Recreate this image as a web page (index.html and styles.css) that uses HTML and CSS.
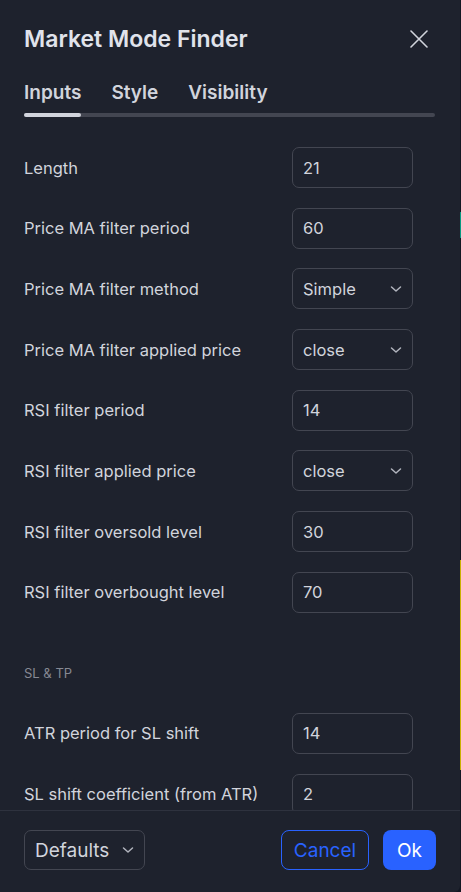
FILE: index.html
```html
<!DOCTYPE html>
<html>
<head>
<meta charset="utf-8">
<link rel="stylesheet" href="styles.css">
</head>
<body>
<div class="chart-edge">
  <span class="edge teal"></span>
  <span class="edge yellow"></span>
</div>
<div class="dialog">
  <div class="header">
    <div class="title">Market Mode Finder</div>
    <svg class="close" width="18" height="18" viewBox="0 0 18 18"><path d="M1 1L17 17M17 1L1 17" stroke="#d1d4dc" stroke-width="1.6" fill="none" stroke-linecap="round"/></svg>
  </div>
  <div class="tabs">
    <div class="tab active">Inputs</div>
    <div class="tab">Style</div>
    <div class="tab">Visibility</div>
  </div>
  <div class="tabbar"><div class="tabbar-active"></div></div>
  <div class="content">
    <div class="row"><div class="label">Length</div><div class="field">21</div></div>
    <div class="row"><div class="label">Price MA filter period</div><div class="field">60</div></div>
    <div class="row"><div class="label">Price MA filter method</div><div class="field select">Simple<svg class="chev" width="12" height="8" viewBox="0 0 12 8"><path d="M1.5 2l4.5 4 4.5-4" stroke="#b2b5be" stroke-width="1.5" fill="none" stroke-linecap="round" stroke-linejoin="round"/></svg></div></div>
    <div class="row"><div class="label">Price MA filter applied price</div><div class="field select">close<svg class="chev" width="12" height="8" viewBox="0 0 12 8"><path d="M1.5 2l4.5 4 4.5-4" stroke="#b2b5be" stroke-width="1.5" fill="none" stroke-linecap="round" stroke-linejoin="round"/></svg></div></div>
    <div class="row"><div class="label">RSI filter period</div><div class="field">14</div></div>
    <div class="row"><div class="label">RSI filter applied price</div><div class="field select">close<svg class="chev" width="12" height="8" viewBox="0 0 12 8"><path d="M1.5 2l4.5 4 4.5-4" stroke="#b2b5be" stroke-width="1.5" fill="none" stroke-linecap="round" stroke-linejoin="round"/></svg></div></div>
    <div class="row"><div class="label">RSI filter oversold level</div><div class="field">30</div></div>
    <div class="row"><div class="label">RSI filter overbought level</div><div class="field">70</div></div>
    <div class="section">SL &amp; TP</div>
    <div class="row"><div class="label">ATR period for SL shift</div><div class="field">14</div></div>
    <div class="row"><div class="label">SL shift coefficient (from ATR)</div><div class="field">2</div></div>
  </div>
  <div class="footer">
    <div class="defaults">Defaults<svg class="chev" width="12" height="8" viewBox="0 0 12 8"><path d="M1.5 2l4.5 4 4.5-4" stroke="#b2b5be" stroke-width="1.5" fill="none" stroke-linecap="round" stroke-linejoin="round"/></svg></div>
    <div class="actions">
      <div class="btn cancel">Cancel</div>
      <div class="btn ok">Ok</div>
    </div>
  </div>
</div>
</body>
</html>
```
FILE: styles.css
```css
* { box-sizing: border-box; }
html, body {
  margin: 0;
  padding: 0;
  background: #131722;
  width: 461px;
  height: 892px;
  overflow: hidden;
  font-family: Inter, "Noto Sans", sans-serif;
  color: #d1d4dc;
}
body { position: relative; }
.chart-edge { position: absolute; left: 460px; top: 0; width: 1px; height: 892px; }
.edge { position: absolute; left: 0; width: 1px; }
.teal { top: 212px; height: 26px; background: #089981; }
.yellow { top: 560px; height: 210px; background: #c9b000; }
.dialog {
  width: 460px;
  height: 892px;
  background: #1e222d;
  border-radius: 0 0 6px 0;
  display: flex;
  flex-direction: column;
  overflow: hidden;
}
.header {
  display: flex;
  align-items: center;
  justify-content: space-between;
  padding: 24px 32px 0 24px;
}
.title {
  font-size: 23px;
  font-weight: 600;
  line-height: 30px;
  color: #e0e3eb;
}
.close { display: block; }
.tabs {
  display: flex;
  gap: 30px;
  padding: 27px 24px 0 24px;
}
.tab {
  font-size: 19px;
  font-weight: 600;
  line-height: 24px;
  color: #d1d4dc;
}
.tabbar {
  margin: 8px 25px 0 24px;
  height: 4px;
  border-radius: 2px;
  background: #434651;
  display: flex;
}
.tabbar-active {
  width: 57px;
  height: 4px;
  border-radius: 2px;
  background: #d1d4dc;
}
.content {
  flex: 1;
  overflow: hidden;
  padding: 30px 47px 0 24px;
}
.row {
  display: flex;
  align-items: center;
  justify-content: space-between;
  height: 41px;
  margin-bottom: 19.7px;
}
.label {
  font-size: 16.5px;
  color: #d1d4dc;
}
.field {
  width: 121px;
  height: 41px;
  border: 1px solid #434651;
  border-radius: 7px;
  padding: 0 10px;
  display: flex;
  align-items: center;
  justify-content: space-between;
  font-size: 16.5px;
  color: #d1d4dc;
}
.chev { display: block; }
.section {
  font-size: 13px;
  color: #868993;
  line-height: 18px;
  margin: 51px 0 31px 0;
}
.footer {
  border-top: 1px solid #2e323e;
  display: flex;
  align-items: center;
  justify-content: space-between;
  padding: 19px 24px 22px 24px;
}
.defaults {
  width: 121px;
  height: 40px;
  border: 1px solid #434651;
  border-radius: 7px;
  display: flex;
  align-items: center;
  justify-content: space-between;
  padding: 0 10px 0 10px;
  font-size: 19px;
  color: #d1d4dc;
}
.actions { display: flex; gap: 14px; }
.btn {
  height: 40px;
  border-radius: 8px;
  display: flex;
  align-items: center;
  justify-content: center;
  font-size: 19px;
}
.cancel {
  width: 88px;
  border: 1px solid #2962ff;
  color: #2962ff;
}
.ok {
  width: 53px;
  background: #2962ff;
  color: #ffffff;
}
```
